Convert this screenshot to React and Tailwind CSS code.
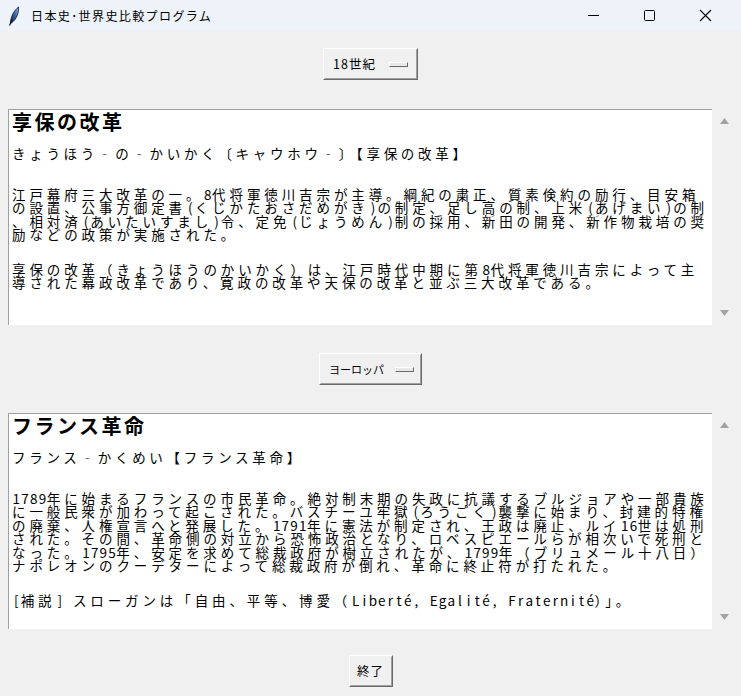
import React from "react";

const FONT = { fontFamily: '"Noto Sans CJK JP", "Noto Sans", sans-serif' };

function Feather() {
  return (
    <svg width="14" height="20" viewBox="0 0 14 20">
      <defs>
        <linearGradient id="fg" x1="0" y1="1" x2="1" y2="0">
          <stop offset="0" stopColor="#1a1a2e" />
          <stop offset="0.5" stopColor="#2f5fa8" />
          <stop offset="1" stopColor="#8fb7e8" />
        </linearGradient>
      </defs>
      <path d="M3.5 17.5 C3.5 11 6.5 5 11.5 1 C12 7 9.5 13 5 16.5 Z" fill="url(#fg)" stroke="#101828" strokeWidth="0.8" />
      <path d="M2.5 19.5 L5 14" stroke="#101828" strokeWidth="1.2" />
    </svg>
  );
}

function RaisedBox({ w, children, className = "" }) {
  return (
    <div className={`${w} h-[32px] border border-t-white border-l-white border-b-[#696969] border-r-[#696969] bg-[#f0f0f0]`}>
      <div className={`h-full border border-t-[#f0f0f0] border-l-[#f0f0f0] border-b-[#a0a0a0] border-r-[#a0a0a0] flex items-center ${className}`}>
        {children}
      </div>
    </div>
  );
}

function Indicator() {
  return <div className="w-[19px] h-[5px] border border-t-white border-l-white border-b-[#696969] border-r-[#696969] bg-[#e8e8e8]" />;
}

function JLine({ text, className = "" }) {
  const out = [];
  let buf = "";
  let k = 0;
  const flush = () => {
    if (buf) {
      out.push(<span key={k++}>{buf}</span>);
      buf = "";
    }
  };
  for (const c of text) {
    if (c.charCodeAt(0) < 0x2000) {
      flush();
      out.push(
        <span key={k++} className="inline-block w-[8.7px] text-center tracking-normal">
          {c === " " ? "\u00a0" : c}
        </span>
      );
    } else {
      buf += c;
    }
  }
  flush();
  return <div className={`whitespace-nowrap ${className}`}>{out}</div>;
}

function TextPane({ title, reading, paras }) {
  return (
    <div className="flex ml-[8px]">
      <div className="w-[704px] h-[216px] bg-white border-t border-l border-[#a0a0a0] pl-[3px] overflow-hidden text-black">
        <div className="text-[20px] leading-[24px] font-bold tracking-[2.5px] whitespace-nowrap">{title}</div>
        <JLine text={reading} className="mt-[12.5px] text-[13.5px] leading-[13.5px] tracking-[3.7px]" />
        {paras.map((p, i) => (
          <div key={i} className={i === 0 ? "mt-[27.5px]" : "mt-[21px]"}>
            {p.map((l, j) => (
              <JLine key={j} text={l} className="text-[13.5px] leading-[13.5px] tracking-[3.9px]" />
            ))}
          </div>
        ))}
      </div>
      <div className="w-[24px] h-[216px] flex flex-col items-center justify-between py-[9px]">
        <svg width="9" height="6" viewBox="0 0 9 6"><path d="M4.5 0 L9 6 L0 6 Z" fill="#a3a3a3" /></svg>
        <svg width="9" height="6" viewBox="0 0 9 6"><path d="M0 0 L9 0 L4.5 6 Z" fill="#a3a3a3" /></svg>
      </div>
    </div>
  );
}

export default function App() {
  return (
    <div className="w-[741px] h-[696px] bg-[#f0f0f0] overflow-hidden" style={FONT}>
      <div className="h-[31px] bg-[#eef2f9] flex items-center">
        <div className="ml-[7px] mt-[1px]"><Feather /></div>
        <div className="ml-[10px] text-[12px] tracking-[1.4px] text-black">日本史･世界史比較プログラム</div>
        <div className="ml-auto flex items-center h-full">
          <div className="w-[56px] flex justify-center"><div className="w-[11px] h-[1px] bg-black" /></div>
          <div className="w-[56px] flex justify-center"><div className="w-[11px] h-[11px] border border-black rounded-[1.5px]" /></div>
          <div className="w-[56px] flex justify-center mr-[8px]">
            <svg width="13" height="13" viewBox="0 0 13 13"><path d="M1 1 L12 12 M12 1 L1 12" stroke="#000" strokeWidth="1.1" /></svg>
          </div>
        </div>
      </div>

      <div className="flex justify-center mt-[17px]">
        <RaisedBox w="w-[95px]" className="justify-between pl-[8px] pr-[8px]">
          <span className="text-[12.5px] tracking-[1px] text-black leading-none">18世紀</span>
          <Indicator />
        </RaisedBox>
      </div>

      <div className="mt-[29px]">
        <TextPane
          title="享保の改革"
          reading="きょうほう‐の‐かいかく〔キャウホウ‐〕【享保の改革】"
          paras={[
            [
              "江戸幕府三大改革の一。8代将軍徳川吉宗が主導。綱紀の粛正、質素倹約の励行、目安箱",
              "の設置、公事方御定書(くじかたおさだめがき)の制定、足し高の制、上米(あげまい)の制",
              "、相対済(あいたいすまし)令、定免(じょうめん)制の採用、新田の開発、新作物栽培の奨",
              "励などの政策が実施された。",
            ],
            [
              "享保の改革（きょうほうのかいかく）は、江戸時代中期に第8代将軍徳川吉宗によって主",
              "導された幕政改革であり、寛政の改革や天保の改革と並ぶ三大改革である。",
            ],
          ]}
        />
      </div>

      <div className="flex justify-center mt-[28px]">
        <RaisedBox w="w-[103px]" className="justify-between pl-[8px] pr-[6px]">
          <span className="text-[11px] tracking-[0px] text-black leading-none">ヨーロッパ</span>
          <Indicator />
        </RaisedBox>
      </div>

      <div className="mt-[28px]">
        <TextPane
          title="フランス革命"
          reading="フランス‐かくめい【フランス革命】"
          paras={[
            [
              "1789年に始まるフランスの市民革命。絶対制末期の失政に抗議するブルジョアや一部貴族",
              "に一般民衆が加わって起こされた。バスチーユ牢獄(ろうごく)襲撃に始まり、封建的特権",
              "の廃棄、人権宣言へと発展した。1791年に憲法が制定され、王政は廃止、ルイ16世は処刑",
              "された。その間、革命側の対立から恐怖政治となり、ロベスピエールらが相次いで死刑と",
              "なった。1795年、安定を求めて総裁政府が樹立されたが、1799年（ブリュメール十八日）",
              "ナポレオンのクーデターによって総裁政府が倒れ、革命に終止符が打たれた。",
            ],
            ["[補説] スローガンは「自由、平等、博愛（Liberté, Egalité, Fraternité）」。"],
          ]}
        />
      </div>

      <div className="flex justify-center mt-[26px]">
        <RaisedBox w="w-[44px]" className="justify-center">
          <span className="text-[12.5px] tracking-[1px] leading-none text-black">終了</span>
        </RaisedBox>
      </div>
    </div>
  );
}
